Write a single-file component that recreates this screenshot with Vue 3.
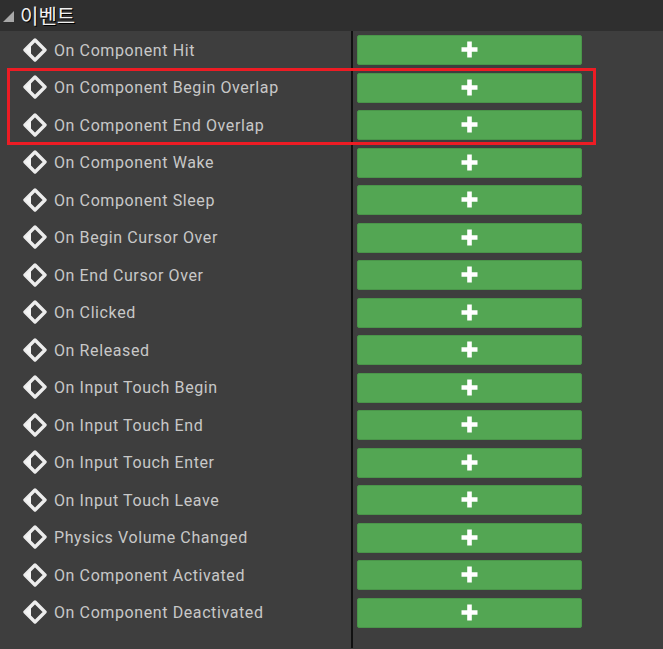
<template>
  <div class="panel">
    <div class="panel-header">
      <span class="arrow" />
      <span class="panel-title">이벤트</span>
    </div>

    <div class="event-list">
      <div v-for="name in events" :key="name" class="event-row">
        <div class="event-name">
          <svg class="event-icon" width="26" height="26" viewBox="0 0 26 26">
            <path d="M13 3 L23 13 L13 23 L3 13 Z" fill="none" stroke="#ececec" stroke-width="3.4" stroke-linejoin="round" />
            <path d="M3.5 13 L9 7.5 L9 18.5 Z" fill="#f4f4f4" />
          </svg>
          <span class="event-label">{{ name }}</span>
        </div>
        <div class="event-action">
          <button class="add-btn">
            <svg class="plus" width="17" height="17" viewBox="0 0 17 17">
              <path d="M6.2 0.5 H10.8 V6.2 H16.5 V10.8 H10.8 V16.5 H6.2 V10.8 H0.5 V6.2 H6.2 Z" fill="#fff" />
            </svg>
          </button>
        </div>
      </div>
      <div class="list-rest" />
    </div>

    <!-- Highlight drawn over the two overlap rows -->
    <div class="highlight" />
  </div>
</template>

<script setup>
const events = [
  'On Component Hit',
  'On Component Begin Overlap',
  'On Component End Overlap',
  'On Component Wake',
  'On Component Sleep',
  'On Begin Cursor Over',
  'On End Cursor Over',
  'On Clicked',
  'On Released',
  'On Input Touch Begin',
  'On Input Touch End',
  'On Input Touch Enter',
  'On Input Touch Leave',
  'Physics Volume Changed',
  'On Component Activated',
  'On Component Deactivated',
]
</script>

<style>
html, body {
  margin: 0;
  background: #3e3e3e;
}
</style>

<style scoped>
.panel {
  position: relative;
  display: flex;
  flex-direction: column;
  width: 663px;
  height: 649px;
  background: #3e3e3e;
  overflow: hidden;
  font-family: Roboto, "Noto Sans CJK KR", sans-serif;
}

.panel-header {
  display: flex;
  align-items: center;
  flex-shrink: 0;
  height: 31px;
  padding-left: 3px;
  gap: 6px;
  background: #2f2f2f;
}

.arrow {
  width: 0;
  height: 0;
  border-left: 11px solid transparent;
  border-bottom: 11px solid #a8a8a8;
  margin-top: 1px;
}

.panel-title {
  font-family: "Noto Sans CJK KR", sans-serif;
  font-size: 20px;
  color: #f0f0f0;
  text-shadow: 1px 1px 0 #000;
}

.event-list {
  display: flex;
  flex-direction: column;
  flex: 1;
}

.event-row {
  display: flex;
  flex-shrink: 0;
  height: 37.5px;
}

.event-name {
  display: flex;
  align-items: center;
  width: 329px;
  padding-left: 22px;
  gap: 6px;
  border-right: 2px solid #111;
}

.event-icon {
  flex-shrink: 0;
  filter: blur(0.6px);
}

.event-label {
  font-size: 16px;
  letter-spacing: 0.6px;
  color: #c8c8c8;
  padding-top: 1px;
}

.event-action {
  display: flex;
  align-items: center;
  padding-left: 4px;
  padding-top: 1px;
}

.add-btn {
  display: flex;
  align-items: center;
  justify-content: center;
  width: 225px;
  height: 30px;
  padding: 0 1px 1px 0;
  background: #53a653;
  border: 1px solid #4a954a;
  border-radius: 2px;
  box-sizing: border-box;
}

.plus {
  filter: blur(0.4px);
}

.list-rest {
  flex: 1;
  width: 351px;
  margin-bottom: 1px;
  border-right: 2px solid #111;
}

.highlight {
  position: absolute;
  left: 7px;
  top: 68px;
  width: 589px;
  height: 77px;
  box-sizing: border-box;
  border: 3px solid #ed1c24;
  pointer-events: none;
}
</style>
